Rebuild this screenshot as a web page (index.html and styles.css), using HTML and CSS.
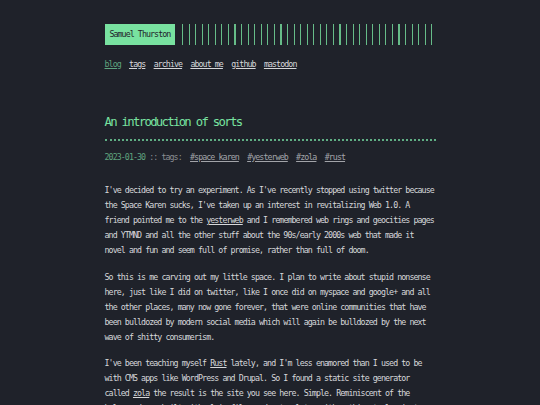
FILE: index.html
```html
<!DOCTYPE html>
<html lang="en">
<head>
<meta charset="utf-8">
<title>An introduction of sorts :: Samuel Thurston</title>
<link rel="stylesheet" href="styles.css">
</head>
<body>
<div class="container">
  <header class="header">
    <div class="logo">Samuel Thurston</div>
    <div class="logo-bars"></div>
  </header>
  <nav class="menu">
    <a class="menu-item active" href="#">blog</a>
    <a class="menu-item" href="#">tags</a>
    <a class="menu-item" href="#">archive</a>
    <a class="menu-item" href="#">about me</a>
    <a class="menu-item" href="#">github</a>
    <a class="menu-item" href="#">mastodon</a>
  </nav>
  <main class="post">
    <h1 class="post-title">An introduction of sorts</h1>
    <div class="post-meta"><span class="post-date">2023-01-30</span> :: tags:<a class="tag" href="#">#space karen</a><a class="tag" href="#">#yesterweb</a><a class="tag" href="#">#zola</a><a class="tag" href="#">#rust</a></div>
    <div class="post-content">
      <p>I've decided to try an experiment. As I've recently stopped using twitter because the Space Karen sucks, I've taken up an interest in revitalizing Web 1.0. A friend pointed me to the <a href="#">yesterweb</a> and I remembered web rings and geocities pages and YTMND and all the other stuff about the 90s/early 2000s web that made it novel and fun and seem full of promise, rather than full of doom.</p>
      <p>So this is me carving out my little space. I plan to write about stupid nonsense here, just like I did on twitter, like I once did on myspace and google+ and all the other places, many now gone forever, that were online communities that have been bulldozed by modern social media which will again be bulldozed by the next wave of shitty consumerism.</p>
      <p>I've been teaching myself <a href="#">Rust</a> lately, and I'm less enamored than I used to be with CMS apps like WordPress and Drupal. So I found a static site generator called <a href="#">zola</a> the result is the site you see here. Simple. Reminiscent of the halcyon days, built with plain files and a template, with nothing to log in to and nothing to track you.</p>
    </div>
  </main>
</div>
</body>
</html>
```
FILE: styles.css
```css
html, body {
  margin: 0;
  padding: 0;
  background: #1f222a;
}

body {
  font-family: "DejaVu Sans Mono", "Liberation Mono", monospace;
  font-size: 8.3px;
  letter-spacing: -0.93px;
  line-height: 15px;
  color: #d6d7da;
}

a {
  color: inherit;
  text-decoration: underline;
}

.container {
  width: 331px;
  margin: 0 auto;
  padding-top: 24px;
}

.header {
  display: flex;
  height: 21px;
}

.logo {
  background: #78e2a0;
  color: #1f222a;
  padding: 0 4.9px;
  line-height: 21px;
}

.logo-bars {
  flex: 1;
  margin-left: 6.7px;
  background: repeating-linear-gradient(90deg, rgba(120, 226, 160, 0.8) 0 1.1px, transparent 1.1px 6.56px);
}

.menu {
  display: flex;
  gap: 8.3px;
  margin-top: 11.5px;
}

.menu-item {
  color: #d6d7da;
}

.menu-item.active {
  color: #5fa47f;
}

.post-title {
  margin: 41.2px 0 8.5px;
  font-size: 12.3px;
  letter-spacing: -1.7px;
  line-height: 18px;
  font-weight: normal;
  color: #78e2a0;
  padding-bottom: 8.6px;
  border-bottom: 2px dotted #5fae84;
}

.post-meta {
  color: #8b8e94;
  margin-bottom: 18.4px;
}

.post-date {
  color: #5fa47f;
}

.tag {
  color: #a2a4a9;
  margin-left: 8.3px;
}

.post-content p {
  margin: 0 0 11.5px;
}
```
